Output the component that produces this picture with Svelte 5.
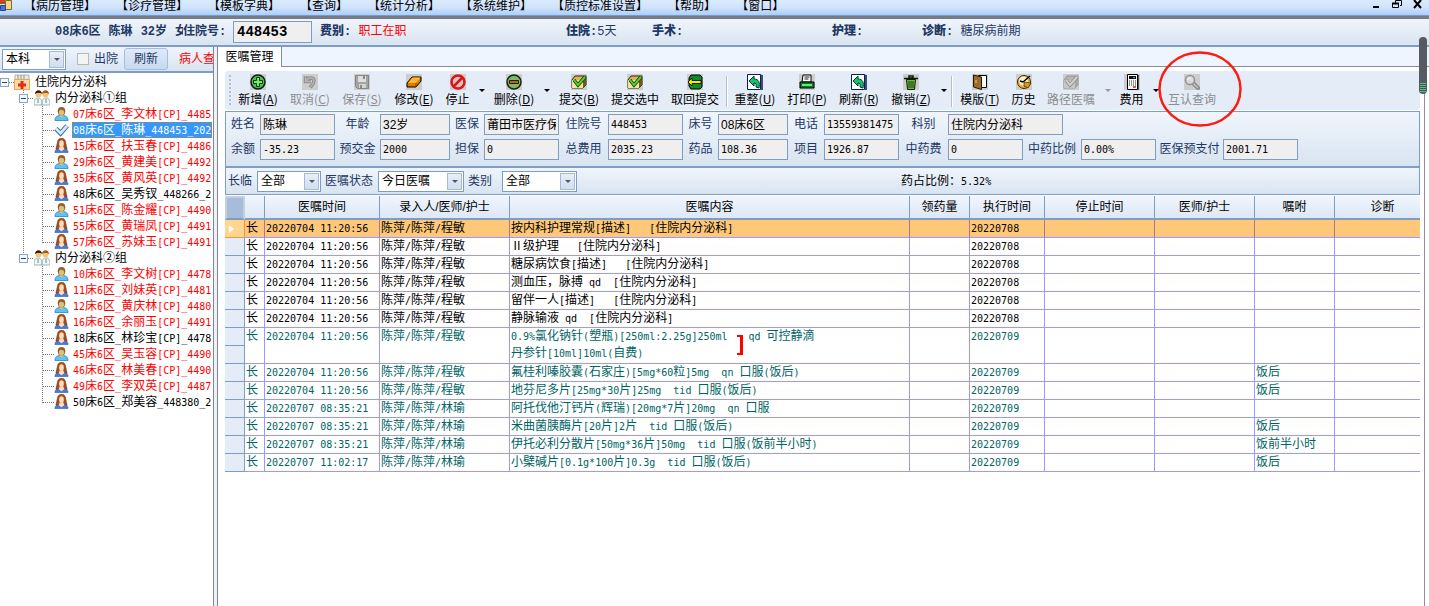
<script>
  const menus = ['病历管理', '诊疗管理', '模板字典', '查询', '统计分析', '系统维护', '质控标准设置', '帮助', '窗口'];

  const tools = [
    { t: '新增', k: 'A', icon: 'add' },
    { t: '取消', k: 'C', icon: 'undo', off: true },
    { t: '保存', k: 'S', icon: 'save', off: true },
    { t: '修改', k: 'E', icon: 'edit' },
    { t: '停止', icon: 'stop', size: 'short', drop: true },
    { t: '删除', k: 'D', icon: 'remove', drop: true },
    { t: '提交', k: 'B', icon: 'check' },
    { t: '提交选中', icon: 'check', size: 'long' },
    { t: '取回提交', icon: 'back', size: 'long' },
    { sep: true },
    { t: '重整', k: 'U', icon: 'redo' },
    { t: '打印', k: 'P', icon: 'print' },
    { t: '刷新', k: 'R', icon: 'redo' },
    { t: '撤销', k: 'Z', icon: 'trash', drop: true },
    { sep: true },
    { t: '模版', k: 'T', icon: 'book' },
    { t: '历史', icon: 'history', size: 'short' },
    { t: '路径医嘱', icon: 'path', size: 'long', off: true, drop: true },
    { t: '费用', icon: 'calc', size: 'short', drop: true },
    { t: '互认查询', icon: 'search', size: 'long', off: true }
  ];

  const groups = [
    {
      name: '内分泌科①组',
      people: [
        ['m', '07床6区_李文林[CP]_4485', 'red'],
        ['v', '08床6区_陈琳_448453_202', 'sel'],
        ['f', '15床6区_扶玉春[CP]_4486', 'red'],
        ['m', '29床6区_黄建美[CP]_4492', 'red'],
        ['f', '35床6区_黄风英[CP]_4492', 'red'],
        ['f', '48床6区_吴秀钗_448266_2', ''],
        ['m', '51床6区_陈金耀[CP]_4490', 'red'],
        ['f', '55床6区_黄瑞凤[CP]_4491', 'red'],
        ['f', '57床6区_苏妹玉[CP]_4491', 'red']
      ]
    },
    {
      name: '内分泌科②组',
      people: [
        ['m', '10床6区_李文树[CP]_4478', 'red'],
        ['f', '11床6区_刘妹英[CP]_4481', 'red'],
        ['m', '12床6区_黄庆林[CP]_4480', 'red'],
        ['f', '16床6区_余丽玉[CP]_4491', 'red'],
        ['f', '18床6区_林珍宝[CP]_4478', ''],
        ['m', '45床6区_吴玉容[CP]_4490', 'red'],
        ['f', '46床6区_林美春[CP]_4490', 'red'],
        ['f', '49床6区_李双英[CP]_4487', 'red'],
        ['f', '50床6区_郑美容_448380_2', '']
      ]
    }
  ];

  const fields = [
    ['姓名', '陈琳'], ['年龄', '32岁'], ['医保', '莆田市医疗保险'], ['住院号', '448453'],
    ['床号', '08床6区'], ['电话', '13559381475'], ['科别', '住院内分泌科', true],
    ['余额', '-35.23'], ['预交金', '2000'], ['担保', '0'], ['总费用', '2035.23'],
    ['药品', '108.36'], ['项目', '1926.87'], ['中药费', '0'], ['中药比例', '0.00%'], ['医保预支付', '2001.71']
  ];

  const heads = ['', '', '医嘱时间', '录入人/医师/护士', '医嘱内容', '领药量', '执行时间', '停止时间', '医师/护士', '嘱咐', '诊断'];
  const A = '陈萍/陈萍/程敏';
  const B = '陈萍/陈萍/林瑜';
  const T = '20220704 11:20:56';
  const orders = [
    { time: T, by: A, text: '按内科护理常规[描述]   [住院内分泌科]', run: '20220708', note: '', cur: true },
    { time: T, by: A, text: 'Ⅱ级护理   [住院内分泌科]', run: '20220708', note: '' },
    { time: T, by: A, text: '糖尿病饮食[描述]   [住院内分泌科]', run: '20220708', note: '' },
    { time: T, by: A, text: '测血压，脉搏 qd  [住院内分泌科]', run: '20220708', note: '' },
    { time: T, by: A, text: '留伴一人[描述]   [住院内分泌科]', run: '20220708', note: '' },
    { time: T, by: A, text: '静脉输液 qd  [住院内分泌科]', run: '20220708', note: '' },
    { time: T, by: A, text: '0.9%氯化钠针(塑瓶)[250ml:2.25g]250ml', second: '丹参针[10ml]10ml(自费)', usage: 'qd 可控静滴', run: '20220709', note: '', med: true },
    { time: T, by: A, text: '氟桂利嗪胶囊(石家庄)[5mg*60粒]5mg  qn 口服(饭后)', run: '20220709', note: '饭后', med: true },
    { time: T, by: A, text: '地芬尼多片[25mg*30片]25mg  tid 口服(饭后)', run: '20220709', note: '饭后', med: true },
    { time: '20220707 08:35:21', by: B, text: '阿托伐他汀钙片(辉瑞)[20mg*7片]20mg  qn 口服', run: '20220709', note: '', med: true },
    { time: '20220707 08:35:21', by: B, text: '米曲菌胰酶片[20片]2片  tid 口服(饭后)', run: '20220709', note: '饭后', med: true },
    { time: '20220707 08:35:21', by: B, text: '伊托必利分散片[50mg*36片]50mg  tid 口服(饭前半小时)', run: '20220709', note: '饭前半小时', med: true },
    { time: '20220707 11:02:17', by: B, text: '小檗碱片[0.1g*100片]0.3g  tid 口服(饭后)', run: '20220709', note: '饭后', med: true }
  ];

  const runs = (s) => s.match(/[\x20-\x7e]+|[^\x20-\x7e]+/g) ?? [];
  const latin = (s) => /^[\x20-\x7e]+$/.test(s);
</script>

{#snippet mixed(s)}{#each runs(s) as r}<span class:lat={latin(r)}>{r}</span>{/each}{/snippet}

{#snippet picker(id, value, size)}
  <span class="picker {size}">
    <select {id} aria-label={value}><option>{value}</option></select>
    <i></i>
  </span>
{/snippet}

{#snippet toolIcon(name)}
  <svg class="ti" viewBox="0 0 16 16" aria-hidden="true">
    <rect width="16" height="16" fill="#cdcdcd" />
    {#if name === 'add'}
      <circle cx="8" cy="8" r="7" fill="#57b85a" stroke="#101a10" stroke-width="1.5" />
      <path d="M6.5 3.5h3v3h3v3h-3v3h-3v-3h-3v-3h3z" fill="#7bea6c" stroke="#0a3d10" />
    {:else if name === 'undo'}
      <path d="M3.500 2v5.500H9M4 7c2-4 8-4 8 0 0 3-2 4-4 6.500" fill="none" stroke="#8c8c8c" stroke-width="3.500" />
      <path d="M3.500 2v5.500H9M4 7c2-4 8-4 8 0 0 3-2 4-4 6.500" fill="none" stroke="#b4b4b4" stroke-width="1.500" />
    {:else if name === 'save'}
      <path d="M1.500 1.500h13v13h-11l-2-2z" fill="#a4a4a4" stroke="#858585" />
      <path d="M4 2h8v6H4z" fill="#dedede" /><path d="M5 10h7v4H5z" fill="#d4d4d4" /><path d="M9 2h2v3H9zM6 11h2v3H6z" fill="#8a8a8a" />
    {:else if name === 'edit'}
      <path d="M1 9l5-6h9v4l-5 6H1z" fill="#e07b00" stroke="#000" />
      <path d="M2 9l4.500-5.500h8L10 9z" fill="#ffb62e" /><path d="M10 9v4" stroke="#7a3c00" />
    {:else if name === 'stop'}
      <circle cx="8" cy="8" r="6.500" fill="#d8c4c4" stroke="#e01414" stroke-width="2.500" />
      <path d="M3.500 12.500l9-9" stroke="#e01414" stroke-width="2.500" />
    {:else if name === 'remove'}
      <circle cx="8" cy="8" r="7" fill="#7cb868" stroke="#182012" stroke-width="1.500" />
      <path d="M3.500 6.500h9v3h-9z" fill="#b06a14" stroke="#2c1600" />
    {:else if name === 'check' || name === 'path'}
      {@const g = name === 'path'}
      <path d="M1 6l3-4h11v9l-3 3H1z" fill={g ? '#b5b5b5' : '#d9b65a'} stroke={g ? '#969696' : '#2f2810'} />
      <path d="M1 6h11v8H1z" fill={g ? '#c6c6c6' : '#f3e2a0'} /><path d="M12 6l3-4v9l-3 3z" fill={g ? '#a8a8a8' : '#6f5a20'} />
      <path d="M3 6l4 5 7-8" fill="none" stroke={g ? '#8b8b8b' : '#0c3c08'} stroke-width="3.500" />
      <path d="M3 6l4 5 7-8" fill="none" stroke={g ? '#d2d2d2' : '#55cf32'} stroke-width="2" />
    {:else if name === 'back'}
      <path d="M4 1h9l2 2v10l-2 2H4l-2-3V4z" fill="#0f8c28" stroke="#000" />
      <path d="M1 8l4-4v2.500h9v3H5V12z" fill="#ffe600" stroke="#000" stroke-width=".8" />
    {:else if name === 'redo'}
      <path d="M.500.500h13v15H.500z" fill="#fff" stroke="#101c40" /><path d="M14 1h2v15h-2z" fill="#35507e" />
      <path d="M2 7l5-5v3c5 0 6 4 5 9l-3-1c.5-3 0-4-2-4v3z" fill="#12c272" stroke="#053d28" />
    {:else if name === 'print'}
      <path d="M4 1h8v7H3z" fill="#fff" stroke="#000" /><path d="M5.500 3h5M5.500 5h4" stroke="#222" />
      <path d="M1 8h14v6H1z" fill="#0b7a2c" stroke="#000" /><path d="M3 11h10" stroke="#61ef6b" stroke-width="2" />
    {:else if name === 'trash'}
      <path d="M3.500 5.500h9l-1 10h-7z" fill="#6dbb3a" stroke="#0a1c05" /><path d="M1 4.500h14M6 2h4v2H6z" fill="none" stroke="#0a1c05" stroke-width="1.500" />
      <path d="M6 7v7M8 7v7M10 7v7" stroke="#123c0a" />
    {:else if name === 'book'}
      <path d="M6.500 1.500h8v12h-8z" fill="#fff" stroke="#000" /><path d="M1.500 1l8 2v12.500l-8-2.500z" fill="#9a6a2e" stroke="#2c1905" /><path d="M4 6v3" stroke="#f0c878" />
    {:else if name === 'history'}
      <circle cx="8" cy="8" r="6.500" fill="#e8b13a" stroke="#3f2a00" /><circle cx="7.500" cy="7" r="4.500" fill="#fbf3d4" />
      <path d="M7 8l7-6M7 8l-3-1" stroke="#000" stroke-width="1.500" /><path d="M8 8l7 1-3 5-4-2z" fill="#d99a18" stroke="#3a2500" stroke-width=".7" />
    {:else if name === 'calc'}
      <path d="M3.500.500h10v15h-10z" fill="#fff" stroke="#000" /><path d="M5 2h7v3H5z" fill="#111" /><path d="M9 3h2v1H9z" fill="#16d3c4" />
      <path d="M5 7h7M5 9h7M5 11h7" stroke="#222" stroke-dasharray="1 1" /><path d="M9 13h3" stroke="#e01a1a" stroke-width="1.500" /><path d="M14 1h1v15h-1z" fill="#555" />
    {:else if name === 'search'}
      <path d="M9 9l5 5" stroke="#898989" stroke-width="4" stroke-linecap="round" /><path d="M9 9l5 5" stroke="#c4c4c4" stroke-width="1.500" />
      <circle cx="6" cy="6" r="4.500" fill="#dadada" stroke="#929292" stroke-width="1.500" /><path d="M4 6c0-2 2-2 3-2" fill="none" stroke="#fff" />
    {/if}
  </svg>
{/snippet}

{#snippet person(kind)}
  <svg class="person" viewBox="0 0 16 16" aria-hidden="true">
    {#if kind === 'm'}
      <path d="M1 15.500C1 11 4 10 8 10s7 1 7 5.500z" fill="#59c3f2" stroke="#1583bd" stroke-width=".8" />
      <path d="M6 9h4v2l-2 1-2-1z" fill="#f0c088" />
      <ellipse cx="8" cy="5.500" rx="4" ry="4.500" fill="#8a6430" /><ellipse cx="8" cy="7" rx="2.800" ry="3" fill="#e4bc74" />
    {:else if kind === 'f'}
      <path d="M4 3C5-.5 11-.5 12 3l2 9H2z" fill="#a34e20" stroke="#7a3410" stroke-width=".6" />
      <path d="M1 15.500C1 12 4 11 8 11s7 1 7 4.500z" fill="#4a7ad2" stroke="#27509c" stroke-width=".6" />
      <path d="M6 9h4l1 3-3 2-3-2z" fill="#f7dcc0" /><ellipse cx="8" cy="6" rx="2.500" ry="3.500" fill="#fbdcb4" />
    {:else}
      <path d="M2 7l5 5 7-8" fill="none" stroke="#31679b" stroke-width="5" /><path d="M2 7l5 5 7-8" fill="none" stroke="#d4ecfa" stroke-width="3" />
    {/if}
  </svg>
{/snippet}

{#snippet minus(x)}
  <rect x={x + 0.5} y="4.500" width="8" height="8" fill="#f4f8fd" stroke="#8ea3bd" />
  <path d="M{x + 2} 8.500h5" stroke="#24477d" />
{/snippet}

<div class="app">
  <header class="menubar">
    <svg class="logo" viewBox="0 0 12 12" aria-hidden="true">
      <path d="M0 0h5v4H0z" fill="#c2471c" /><path d="M5.500.500h6v9h-6z" fill="#f6d77a" stroke="#7b6a42" /><path d="M.500 5.500h5v5h-5z" fill="#3f74d8" stroke="#27468c" />
    </svg>
    <nav>{#each menus as m}<a href="#menu">【{m}】</a>{/each}</nav>
    <svg class="winctl" viewBox="0 0 52 12" aria-hidden="true">
      <path d="M2 7h6" stroke="#000" stroke-width="2" />
      <path d="M24.500 3V.500h6v5H29M21.500 3.500h6v4h-6z" fill="none" stroke="#000" /><path d="M21 3.500h7" stroke="#000" stroke-width="2" />
      <path d="M43 0l7 8M50 0l-7 8" stroke="#000" stroke-width="2" />
    </svg>
  </header>

  <section class="patient">
    <div class="who"><span>08床6区</span><span>陈琳</span><span>32岁</span><span>女</span></div>
    <label for="pid">住院号:</label>
    <input id="pid" value="448453" readonly />
    <b class="c1">费别: <em>职工在职</em></b>
    <b class="c2">住院:<span>5天</span></b>
    <b class="c3">手术:</b>
    <b class="c4">护理:</b>
    <b>诊断: <span>糖尿病前期</span></b>
  </section>

  <div class="body">
    <aside>
      <div class="side-tools">
        {@render picker('scope', '本科', 'p64')}
        <label class="chk"><input type="checkbox" />出院</label>
        <button class="refresh">刷新</button>
        <span class="find">病人查询</span>
      </div>
      <ul class="tree">
        <li class="row">
          <svg class="g0" viewBox="0 0 14 16" aria-hidden="true">{@render minus(0)}<path d="M9 8.500h5" stroke="#777" stroke-dasharray="1 1" /></svg>
          <svg class="node" viewBox="0 0 16 16" aria-hidden="true">
            <path d="M1 1h14v6H1z" fill="#e8e8e8" stroke="#999" stroke-width=".7" /><path d="M4 1v4M7 1v4M10 1v4" stroke="#999" />
            <path d="M0 5h16v11H0z" fill="#f0a850" /><path d="M1 6h14v9H1z" fill="#fbd9a4" /><path d="M6.500 7h3v2.500H12v3H9.500V15h-3v-2.500H4v-3h2.500z" fill="#e22a18" />
          </svg>
          <span class="name">住院内分泌科</span>
        </li>
        {#each groups as g, gi}
          <li class="row">
            <svg class="g1" viewBox="0 0 34 16" aria-hidden="true">
              <path d="M23.500 0v{gi === 0 ? 16 : 4}" stroke="#777" stroke-dasharray="1 1" />{@render minus(19)}<path d="M28 8.500h6" stroke="#777" stroke-dasharray="1 1" />
            </svg>
            <svg class="node" viewBox="0 0 16 16" aria-hidden="true">
              <path d="M0 15c0-5 1-7 4-7s4 2 4 7zM8 15c0-5 1-7 4-7s4 2 4 7z" fill="#f4f7f8" stroke="#8fa0a4" stroke-width=".8" />
              <circle cx="4.500" cy="4.500" r="3" fill="#f5c27c" /><circle cx="11.500" cy="4.500" r="3" fill="#f5c27c" />
              <path d="M1 4c0-5 7-5 7 0L6.500 3H3z" fill="#3a1c10" /><path d="M8 4c0-5 7-5 7 0l-2-1H10z" fill="#a65a10" /><path d="M4 9v4M12 9v4" stroke="#3c9a9a" />
            </svg>
            <span class="name">{g.name}</span>
          </li>
          {#each g.people as [kind, label, tone], i}
            <li class="row">
              <svg class="g2" viewBox="0 0 54 16" aria-hidden="true">
                {#if gi === 0}<path d="M23.500 0v16" stroke="#777" stroke-dasharray="1 1" />{/if}
                <path d="M42.500 0v{i === g.people.length - 1 ? 9 : 16}M43 8.500h11" stroke="#777" stroke-dasharray="1 1" fill="none" />
              </svg>
              {@render person(kind)}
              <span class="name {tone}">{@render mixed(label)}</span>
            </li>
          {/each}
        {/each}
      </ul>
    </aside>

    <main>
      <div class="tabs"><button class="tab">医嘱管理</button></div>
      <div class="page">
        <div class="toolbar">
          <span class="grip"></span>
          {#each tools as b}
            {#if b.sep}
              <span class="sep"></span>
            {:else}
              <button class="tool {b.size ?? ''}" disabled={b.off}>
                {@render toolIcon(b.icon)}
                <span>{b.t}{#if b.k}(<u>{b.k}</u>){/if}</span>
              </button>
              {#if b.drop}<button class="drop" disabled={b.off} aria-label="{b.t}选项"></button>{/if}
            {/if}
          {/each}
          <svg class="ring" viewBox="0 0 84 76" aria-hidden="true"><ellipse cx="42" cy="38" rx="40.500" ry="36.500" fill="none" stroke="#fb1d12" stroke-width="2.500" /></svg>
        </div>

        <form class="info">
          {#each fields as [label, value, wide], i}
            <label for="f{i}">{label}</label>
            <input id="f{i}" class:wide class:num={latin(value)} {value} readonly />
          {/each}
        </form>

        <div class="filters">
          <label for="term">长临</label>{@render picker('term', '全部', 'p64')}
          <label for="state">医嘱状态</label>{@render picker('state', '今日医嘱', 'p86')}
          <label for="kind" class="kind">类别</label>{@render picker('kind', '全部', 'p75')}
          <span class="ratio">{@render mixed('药占比例：5.32%')}</span>
        </div>

        <table>
          <colgroup>
            <col class="w20" /><col class="w20" /><col class="w115" /><col class="w130" /><col class="w400" /><col class="w60" /><col class="w75" /><col class="w110" /><col class="w100" /><col class="w80" /><col />
          </colgroup>
          <thead>
            <tr>{#each heads as h}<th>{h}</th>{/each}</tr>
          </thead>
          <tbody>
            {#each orders as o}
              <tr class:cur={o.cur} class:med={o.med} class:tall={o.second}>
                <td class="mark">{#if o.cur}<i></i>{/if}</td>
                <td>长</td>
                <td>{@render mixed(o.time)}</td>
                <td>{@render mixed(o.by)}</td>
                <td>
                  {#if o.second}
                    <div class="combo">
                      <div><p>{@render mixed(o.text)}</p><p>{@render mixed(o.second)}</p></div>
                      <i class="brace"></i>
                      <span>{@render mixed(o.usage)}</span>
                    </div>
                  {:else}{@render mixed(o.text)}{/if}
                </td>
                <td></td>
                <td>{@render mixed(o.run)}</td>
                <td></td>
                <td></td>
                <td>{o.note}</td>
                <td></td>
              </tr>
            {/each}
          </tbody>
        </table>
      </div>
    </main>
  </div>
  <div class="thumb"></div>
</div>

<style>
  :global(body) { margin: 0; background: #fff; overflow: hidden; }
  * { box-sizing: border-box; }
  .app {
    position: relative;
    display: flex;
    flex-direction: column;
    min-height: 100vh;
    overflow: hidden;
    font: 12px/16px "Liberation Sans", "Noto Sans CJK SC", sans-serif;
    color: #000;
  }
  button, input, select { font: inherit; color: inherit; margin: 0; padding: 0; border-radius: 0; }
  svg { display: block; flex: none; }
  .lat { font-family: "DejaVu Sans Mono", monospace; font-size: 10px; }

  .menubar {
    display: flex;
    align-items: flex-start;
    height: 16px;
    overflow: hidden;
    background: linear-gradient(#dcebfe, #cfe3fd 50%, #b0cff7);
    border-bottom: 1px solid #6f9bd6;
  }
  .logo { width: 12px; height: 12px; margin-right: 12px; }
  nav { display: flex; flex: 1; gap: 20px; line-height: 10px; white-space: nowrap; font-family: "Noto Sans CJK SC", sans-serif; }
  nav a { color: #000; text-decoration: none; }
  .winctl { width: 52px; height: 12px; margin-right: 6px; }

  .patient {
    display: flex;
    align-items: center;
    height: 31px;
    padding-left: 55px;
    border-top: 3px solid #767b83;
    border-bottom: 2px solid #7f9dc2;
    background: linear-gradient(#f0f5fc, #d8e4f1);
    color: #1f3864;
    font-family: "Liberation Mono", "Noto Sans CJK SC", monospace;
    font-weight: bold;
    white-space: nowrap;
  }
  .who { display: flex; gap: 8px; width: 128px; overflow: hidden; }
  .patient label { width: 50px; }
  .patient input { width: 79px; height: 22px; padding-left: 3px; border: 1px solid #7f9dc2; background: #efefef; color: #000; font-size: 14px; margin-right: 8px; }
  .patient b span, .patient em { font-weight: normal; font-style: normal; }
  .patient em { color: #f00; }
  .c1 { width: 246px; }
  .c2 { width: 86px; }
  .c3 { width: 180px; }
  .c4 { width: 90px; }

  .body { display: flex; flex: 1; min-height: 0; background: #eef1f5; }
  aside { width: 214px; flex: none; overflow: hidden; background: #fff; border-right: 1px solid #80868f; }
  .side-tools { display: flex; align-items: center; height: 26px; padding-left: 2px; white-space: nowrap; background: linear-gradient(#f0f5fc, #d8e4f1); border-bottom: 2px solid #7f9dc2; color: #1f3864; }
  .side-tools > * { flex: none; }
  .picker { display: inline-flex; align-items: center; height: 21px; padding-right: 1px; background: #fff; border: 1px solid #7f9dc2; color: #000; }
  .picker select { flex: 1; min-width: 0; height: 19px; line-height: 16px; padding-left: 3px; border: 0; background: none; appearance: none; }
  .picker i { display: grid; place-items: center; width: 15px; height: 17px; border: 1px solid #a3bad8; background: linear-gradient(#e6eefa, #d0deef); }
  .picker i::after { content: ""; border: 3px solid transparent; border-top-color: #555; border-bottom: 0; }
  .p64 { width: 64px; }
  .p75 { width: 75px; }
  .p86 { width: 86px; }
  .chk { display: flex; align-items: center; gap: 5px; margin-left: 11px; }
  .chk input { width: 12px; height: 12px; appearance: none; border: 1px solid #b4bac2; background: #f4f4f0; }
  .refresh { width: 44px; height: 22px; margin: 0 11px 0 6px; border: 1px solid #a6bddb; border-radius: 3px; background: linear-gradient(#dfeafa, #c8d9ee); }
  .find { color: #f00; }

  .tree { list-style: none; margin: 0; padding: 1px 0 0; }
  .row { display: flex; height: 16px; white-space: nowrap; }
  .g0 { width: 14px; height: 16px; }
  .g1 { width: 34px; height: 16px; }
  .g2 { width: 54px; height: 16px; }
  .node { width: 16px; height: 16px; margin-right: 5px; }
  .person { width: 15px; height: 15px; margin-right: 3px; }
  .name { line-height: 16px; }
  .row .person + .name { flex: 1; padding-left: 1px; margin-right: 1px; overflow: hidden; }
  .red { color: #f00; }
  .sel { color: #fff; background: #3399ff; outline: 1px dotted #d07a20; outline-offset: -1px; }

  main { flex: 1; min-width: 0; margin-left: 3px; border-left: 1px solid #80868f; display: flex; flex-direction: column; background: #fff; }
  .tabs { display: flex; height: 20px; background: #eff5fe; border-bottom: 1px solid #858b9c; }
  .tab { width: 64px; height: 20px; border: 0; border-right: 1px solid #858b9c; background: #fff; line-height: 16px; }
  .page { flex: 1; margin-right: 4px; padding: 4px 4px 0 7px; border-right: 1px solid #8c8f9c; }

  .toolbar { position: relative; display: flex; height: 39px; margin-bottom: 1px; background: #e4ecf7; border-radius: 3px; font-family: "Noto Sans CJK SC", sans-serif; }
  .grip { width: 2px; margin: 4px 1px 5px 4px; background: repeating-linear-gradient(#b5bfce 0 2px, transparent 2px 4px); }
  .tool { display: flex; flex-direction: column; align-items: center; width: 52px; padding-top: 3px; border: 0; background: none; white-space: nowrap; }
  .tool.short { width: 35px; }
  .tool.long { width: 60px; }
  .tool span { line-height: 18px; }
  .tool:disabled { color: #8d8d8d; }
  .ti { width: 16px; height: 16px; }
  .drop { display: grid; place-items: center; width: 13px; border: 0; background: none; }
  .drop::after { content: ""; border: 3px solid transparent; border-top-color: #000; border-bottom: 0; }
  .drop:disabled::after { border-top-color: #999; }
  .sep { width: 2px; margin: 5px 1px 3px 1px; border-left: 1px solid #b9bdc4; border-right: 1px solid #fff; }
  .ring { position: absolute; left: 933px; top: -20px; width: 84px; height: 76px; pointer-events: none; }

  .info {
    display: grid;
    grid-template-columns: 34px 75px 45px 70px 34px 75px 49px 75px 35px 70px 36px 75px 49px 75px 58px 75px 67px 75px;
    grid-auto-rows: 21px;
    row-gap: 4px;
    height: 56px;
    padding-top: 2px;
    border: 1px solid #7f9dc2;
    background: linear-gradient(#f0f5fc, #d8e4f1);
    color: #1f3864;
    white-space: nowrap;
  }
  .info label { text-align: center; line-height: 21px; }
  .info input { width: 100%; min-width: 0; padding: 0 2px; border: 1px solid #7f9dc2; background: #efefef; color: #000; }
  .info .num { font-family: "DejaVu Sans Mono", monospace; font-size: 10px; }
  .info .wide { grid-column: span 5; width: 115px; }

  .filters { display: flex; align-items: center; height: 28px; padding-left: 2px; border: 1px solid #7f9dc2; background: linear-gradient(#f0f5fc, #d8e4f1); color: #1f3864; white-space: nowrap; }
  .filters label { margin-right: 5px; }
  .filters .picker + label { margin-left: 4px; }
  .filters .kind { margin-right: 10px; }
  .ratio { margin-left: 324px; color: #000; }

  table { width: 100%; margin-top: 1px; table-layout: fixed; border-collapse: separate; border-spacing: 0; }
  .w20 { width: 20px; }
  .w60 { width: 60px; }
  .w75 { width: 75px; }
  .w80 { width: 80px; }
  .w100 { width: 100px; }
  .w110 { width: 110px; }
  .w115 { width: 115px; }
  .w130 { width: 130px; }
  .w400 { width: 400px; }
  th { height: 24px; padding: 0; font-weight: normal; background: linear-gradient(#eff5fd, #dde8f6); border-right: 1px solid #7f9dc2; border-bottom: 2px solid #7f9dc2; }
  th:first-child { background: #a6bcd9; border: 2px solid #c4d0e2; border-bottom-color: #7f9dc2; }
  th:last-child { border-right: 0; padding-left: 10px; }
  td { height: 18px; padding: 0 0 0 1px; line-height: 17px; white-space: pre; overflow: hidden; border-right: 1px solid #9999ff; border-bottom: 1px solid #9999ff; }
  td:last-child { border-right: 0; }
  td.mark { padding: 0; background: #e4ecf7; border-color: #7f9dc2; }
  .med { color: #006464; }
  .cur td { background: #ffc878; border-right-color: #a67a94; }
  .cur td.mark { background: #ffd58f; border-color: #f0963c; }
  .mark i { display: block; width: 0; margin-left: 4px; border: 4px solid transparent; border-left: 5px solid #fff; border-right: 0; }
  .tall td { height: 36px; vertical-align: top; }
  .tall td.mark { background: linear-gradient(#e4ecf7 17px, #7f9dc2 17px 18px, #e4ecf7 18px); }
  .combo { display: flex; height: 35px; }
  .combo p { margin: 0; line-height: 17px; }
  .brace { width: 6px; height: 20px; margin: 7px 6px 0 9px; border: 2px solid #f00; border-right-width: 3px; border-left: 0; }

  .thumb { position: absolute; right: 2px; top: 37px; width: 8px; height: 57px; border-radius: 4px; background: repeating-linear-gradient(#4fc77a 0 1px, #4a5058 1px 2px) 1px 46px / 6px 9px no-repeat, #565b63; }
</style>
